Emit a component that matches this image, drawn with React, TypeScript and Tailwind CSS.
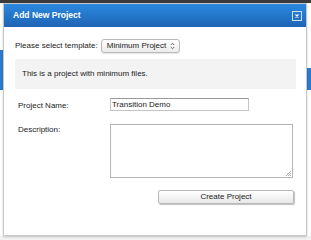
import React from 'react';

const font = { fontFamily: '"Liberation Sans", Arial, sans-serif' };

export default function App() {
  return (
    <div className="relative w-[311px] h-[240px] overflow-hidden bg-white" style={font}>
      {/* page behind the dialog */}
      <div className="h-[3px] bg-[#3a3a3a]" />
      <div className="absolute left-0 top-[50px] w-[3px] h-[40px] bg-[#2a7bd0]" />
      <div className="absolute right-0 top-[68px] w-[4px] h-[22px] bg-[#2a7bd0]" />
      <div className="absolute left-0 top-[236px] w-full h-[4px] bg-[#f2f2f2]" />

      {/* dialog */}
      <div className="absolute left-[3px] top-[3px] w-[304px] h-[233px] bg-white border border-[#c8c8c8] shadow-[0_1px_2px_rgba(0,0,0,0.2)] flex flex-col">
        <div className="h-[23px] flex items-center justify-between pl-[9px] pr-[4px] bg-gradient-to-b from-[#2b8ae0] to-[#1e63b5]">
          <span className="text-white font-bold text-[8.5px]">Add New Project</span>
          <span className="w-[10px] h-[10px] border border-[#cfe0f5] flex items-center justify-center">
            <svg width="4" height="4" viewBox="0 0 4 4">
              <path d="M0.5 0.5L3.5 3.5M3.5 0.5L0.5 3.5" stroke="white" strokeWidth="1.2" />
            </svg>
          </span>
        </div>

        <div className="px-[11px] pt-[12px] text-[8px] leading-[10px] text-[#222] whitespace-nowrap">
          <div className="flex items-center gap-[3px] h-[14px]">
            <span>Please select template:</span>
            <div className="h-[14px] w-[79px] flex items-center justify-between pl-[5px] pr-[4px] border border-[#b9b9b9] rounded-[3px] bg-gradient-to-b from-white to-[#ececec] shadow-[0_1px_1px_rgba(0,0,0,0.1)]">
              <span>Minimum Project</span>
              <svg width="5" height="8" viewBox="0 0 5 8">
                <path d="M0.8 3L2.5 1.3L4.2 3M0.8 5L2.5 6.7L4.2 5" fill="none" stroke="#555" strokeWidth="0.9" />
              </svg>
            </div>
          </div>

          <div className="mt-[6px] h-[30px] w-[281px] bg-[#f3f3f3] flex items-center pl-[7px]">
            This is a project with minimum files.
          </div>

          <div className="mt-[9px] flex items-start">
            <span className="w-[95px] pl-[3px] pt-[3px]">Project Name:</span>
            <div className="h-[13px] w-[139px] border border-[#c4c4c4] border-t-[#999] flex items-center pl-[1px]">
              Transition Demo
            </div>
          </div>

          <div className="mt-[13px] flex items-start">
            <span className="w-[95px] pl-[3px] pt-[1px]">Description:</span>
            <div className="relative h-[54px] w-[183px] border border-[#b5b5b5]">
              <svg className="absolute right-[1px] bottom-[1px]" width="6" height="6" viewBox="0 0 6 6">
                <path d="M6 1L1 6M6 3L3 6M6 5L5 6" stroke="#999" strokeWidth="0.8" />
              </svg>
            </div>
          </div>

          <div className="mt-[12px] flex justify-end pr-[1px]">
            <div className="h-[14px] w-[136px] flex items-center justify-center border border-[#b9b9b9] rounded-[2px] bg-gradient-to-b from-white to-[#e8e8e8] shadow-[1px_1px_1px_rgba(0,0,0,0.25)]">
              Create Project
            </div>
          </div>
        </div>
      </div>
    </div>
  );
}
